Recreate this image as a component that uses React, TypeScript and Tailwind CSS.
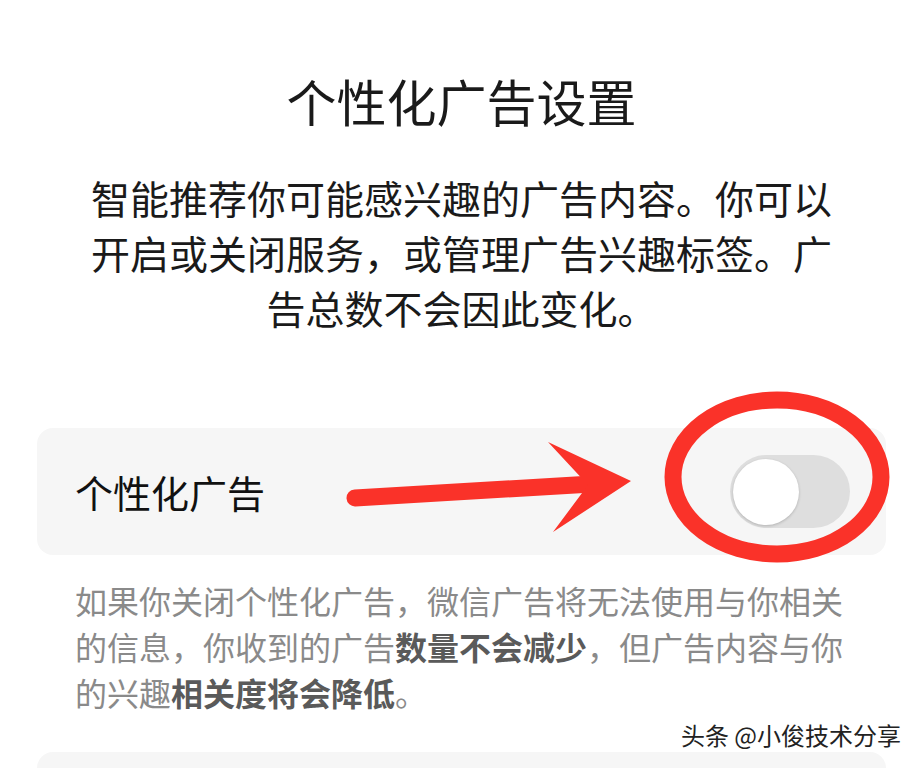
import React from 'react';

const font = { fontFamily: '"Noto Sans CJK SC", "Noto Sans", sans-serif' };

function Toggle() {
  return (
    <div className="w-[120px] h-[73px] rounded-full bg-[#dedede] flex items-center pl-[3px]">
      <div className="w-[66px] h-[66px] rounded-full bg-white shadow-[0_1px_3px_rgba(0,0,0,0.2)]" />
    </div>
  );
}

// red annotation drawn over the screenshot
function Annotation() {
  return (
    <svg className="absolute inset-0 pointer-events-none" width="923" height="768" viewBox="0 0 923 768">
      <line x1="355" y1="498" x2="592" y2="484" stroke="#fa3229" strokeWidth="17" strokeLinecap="round" />
      <polygon points="548,442 631,481 553,532 588,485" fill="#fa3229" />
      <ellipse cx="777" cy="477" rx="104" ry="77" fill="none" stroke="#fa3229" strokeWidth="17" />
    </svg>
  );
}

export default function App() {
  return (
    <div className="relative w-[923px] h-[768px] overflow-hidden bg-white" style={font}>
      <div className="flex flex-col items-center">
        <h1 className="mt-[70px] text-[50px] leading-[60px] text-[#1a1a1a] font-normal">个性化广告设置</h1>
        <p className="mt-[40px] text-[39px] leading-[55px] text-[#1a1a1a] text-center">
          智能推荐你可能感兴趣的广告内容。你可以
          <br />
          开启或关闭服务，或管理广告兴趣标签。广
          <br />
          告总数不会因此变化。
        </p>
      </div>

      <div className="mx-[37px] mt-[93px] h-[127px] rounded-[16px] bg-[#f6f6f6] flex items-center justify-between pl-[38px] pr-[36px]">
        <span className="text-[38px] text-[#111]">个性化广告</span>
        <Toggle />
      </div>

      <p className="mt-[22px] px-[75px] text-[32px] leading-[46px] text-[#8a8a8a]">
        如果你关闭个性化广告，微信广告将无法使用与你相关
        <br />
        的信息，你收到的广告<b className="font-bold text-[#5a5a5a]">数量不会减少</b>，但广告内容与你
        <br />
        的兴趣<b className="font-bold text-[#5a5a5a]">相关度将会降低</b>。
      </p>

      <div className="flex justify-end pr-[22px] mt-[5px]">
        <span className="text-[24px] leading-[30px] text-[#222] [text-shadow:1px_1px_0_#fff,-1px_-1px_0_#fff]">头条 @小俊技术分享</span>
      </div>

      <div className="mx-[37px] mt-[2px] h-[80px] rounded-t-[16px] bg-[#f6f6f6]" />

      <Annotation />
    </div>
  );
}
